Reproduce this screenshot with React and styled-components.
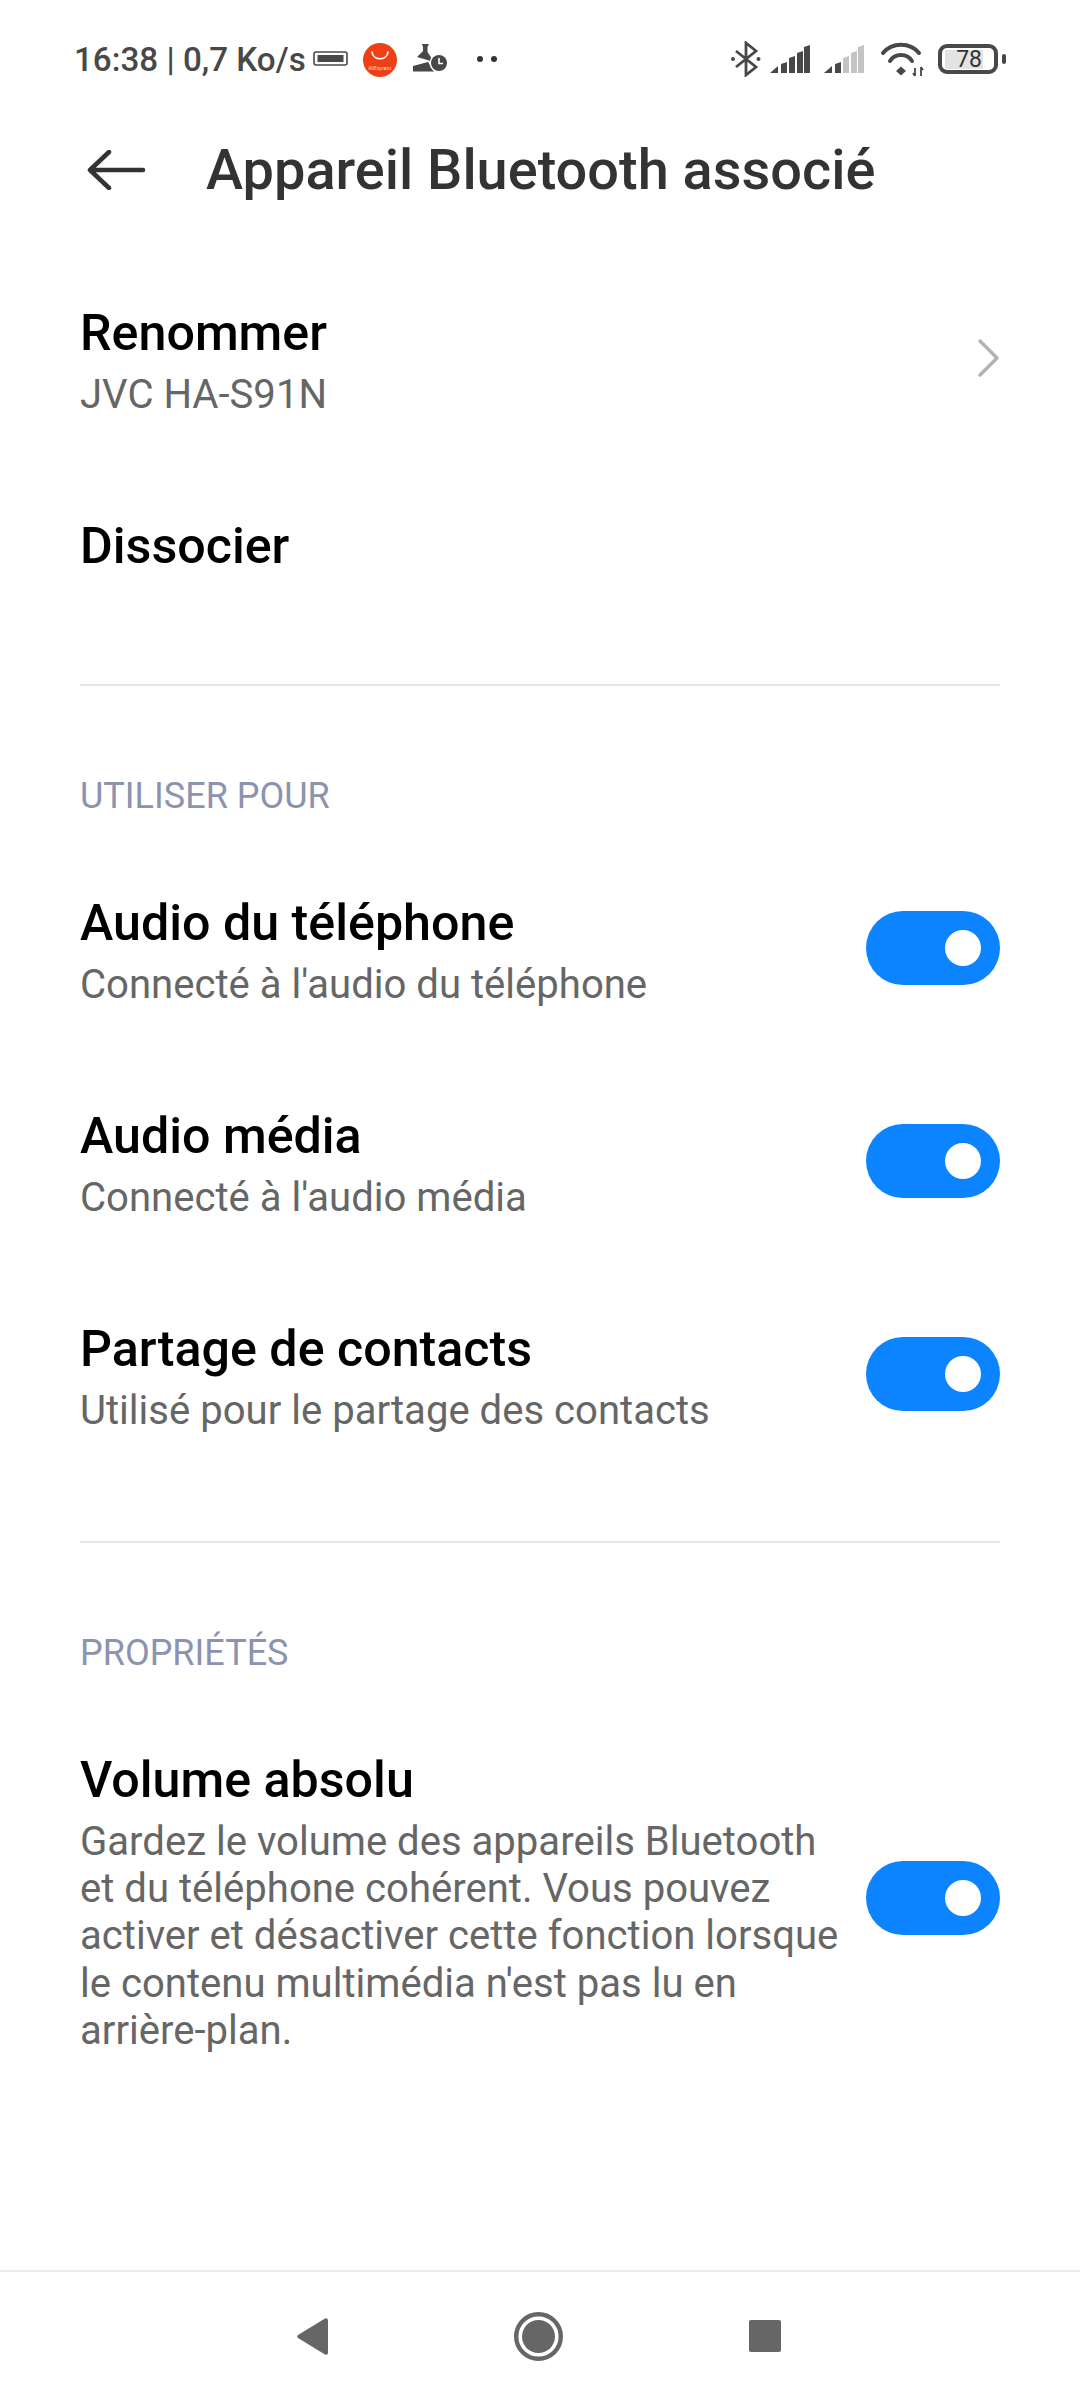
import React from "react";
import styled, { createGlobalStyle } from "styled-components";

const Global = createGlobalStyle`
  html, body { margin: 0; padding: 0; background: #fff; }
  body { font-family: Roboto, "Noto Sans", sans-serif; }
`;

const Page = styled.div`
  width: 1080px;
  height: 2400px;
  display: flex;
  flex-direction: column;
  background: #fff;
  overflow: hidden;
`;

const StatusBar = styled.div`
  height: 118px;
  padding: 0 74px 0 74px;
  display: flex;
  align-items: center;
  justify-content: space-between;
  box-sizing: border-box;
  flex: none;
`;

const StatusGroup = styled.div`
  display: flex;
  align-items: center;
`;

const Clock = styled.span`
  font-size: 33.2px;
  font-weight: 500;
  color: #484848;
  white-space: nowrap;
`;

const StatusIcon = styled.svg`
  display: block;
  flex: none;
  margin-left: ${(p) => p.$gap || 0}px;
`;

const Header = styled.header`
  height: 104px;
  padding-left: 86px;
  display: flex;
  align-items: center;
  gap: 60px;
  flex: none;
`;

const Title = styled.h1`
  margin: 0;
  font-size: 55.9px;
  font-weight: 500;
  color: #333;
  white-space: nowrap;
`;

const Content = styled.main`
  flex: 1;
  padding: 29px 80px 0;
  display: flex;
  flex-direction: column;
`;

const Row = styled.div`
  min-height: ${(p) => p.$height || 213}px;
  display: flex;
  align-items: center;
  justify-content: space-between;
  gap: 24px;
`;

const RowText = styled.div`
  align-self: flex-start;
  margin-top: 52px;
  display: flex;
  flex-direction: column;
  flex: 1;
  min-width: 0;
`;

const RowTitle = styled.div`
  font-size: 50.2px;
  line-height: 60px;
  font-weight: 500;
  color: #000;
`;

const RowSub = styled.div`
  margin-top: 8px;
  font-size: 40.1px;
  line-height: 47.2px;
  color: #666;
`;

const Divider = styled.hr`
  margin: ${(p) => p.$top}px 0 0;
  border: 0;
  border-top: 2px solid #e5e5e5;
`;

const SectionLabel = styled.div`
  margin: 80px 0 15px;
  font-size: 36px;
  line-height: 60px;
  color: #8c93b0;
`;

const Toggle = styled.div`
  width: 134px;
  height: 74px;
  border-radius: 37px;
  background: #0d84ff;
  flex: none;
  display: flex;
  align-items: center;
  justify-content: flex-end;
  padding-right: 19px;
  box-sizing: border-box;
`;

const Knob = styled.div`
  width: 36px;
  height: 36px;
  border-radius: 50%;
  background: #fff;
`;

const NavBar = styled.nav`
  height: 130px;
  padding-right: 3px;
  border-top: 2px solid #ececec;
  box-sizing: border-box;
  flex: none;
  display: flex;
  align-items: center;
  justify-content: center;
  gap: 186px;
`;

const Chevron = () => (
  <svg width="24" height="40" viewBox="0 0 24 40" fill="none" stroke="#b3b3b3" strokeWidth="3.4" strokeLinecap="round" strokeLinejoin="round">
    <path d="M4 3 L21 20 L4 37" />
  </svg>
);

const BackArrow = () => (
  <svg width="60" height="40" viewBox="0 0 60 40" fill="none" stroke="#333" strokeWidth="4.5" strokeLinecap="round" strokeLinejoin="round">
    <path d="M4 20 H57 M23 2 L4 20 L23 38" />
  </svg>
);

const StatusLeftIcons = () => (
  <StatusIcon $gap={7} width="190" height="44" viewBox="0 0 190 44">
    <rect x="1" y="15" width="33" height="13" rx="2" fill="none" stroke="#484848" strokeWidth="1.6" />
    <rect x="4.500" y="18" width="26" height="7" fill="#484848" />
    <circle cx="67" cy="23" r="17" fill="#ee3f17" />
    <path d="M59 15 C60 24 74 24 75 15" fill="none" stroke="#fff" strokeWidth="1.7" strokeLinecap="round" />
    <text x="67" y="33" fontSize="5" fontFamily="Roboto" fill="#ffd9cc" textAnchor="middle">AliExpress</text>
    <g transform="translate(92 1)" fill="#484848">
      <path d="M17 6 H24 L22.500 9 V14 L29 24 L12 19 L18 13 V9 Z" />
      <path d="M8 28 L23 24 L29 33.500 H8 Z" />
      <circle cx="34" cy="25" r="9.500" fill="#fff" />
      <circle cx="34" cy="25" r="8" />
      <path d="M34 20 V25.500 H38" fill="none" stroke="#fff" strokeWidth="1.6" />
    </g>
    <circle cx="167" cy="22" r="3" fill="#333" />
    <circle cx="181" cy="22" r="3" fill="#333" />
  </StatusIcon>
);

const BAR_SPECS = [
  [11, 6, 17],
  [19, 6, 11],
  [27, 6, 6],
  [34, 6, 0],
];

const SignalBars = ({ active, gap }) => (
  <StatusIcon $gap={gap} width="40" height="29" viewBox="0 0 40 29">
    <path d="M0 28 L8 21 V28 Z" fill="#484848" />
    {BAR_SPECS.map(([x, w, top], i) => (
      <path key={x} d={`M${x} ${top + 2} L${x + w} ${top} V28 H${x} Z`} fill={i + 1 < active ? "#484848" : "#c4c4c4"} />
    ))}
  </StatusIcon>
);

const StatusRightIcons = () => (
  <StatusGroup>
    <StatusIcon width="30" height="36" viewBox="0 0 30 36" fill="none" stroke="#484848" strokeWidth="2.8">
      <path d="M5 10 L25 26 L15 34 V2 L25 10 L5 26" />
      <circle cx="2" cy="18" r="2" fill="#484848" stroke="none" />
      <circle cx="27.500" cy="18" r="2" fill="#484848" stroke="none" />
    </StatusIcon>
    <SignalBars active={5} gap={9} />
    <SignalBars active={2} gap={14} />
    <StatusIcon $gap={16} width="46" height="36" viewBox="0 0 46 36" fill="none" stroke="#484848" strokeWidth="4" strokeLinecap="round">
      <path d="M3 12 C12 1 30 1 39 12" />
      <path d="M10 20 C15 12 27 12 32 20" />
      <path d="M21 25.500 L26 30 L21 34.500 L16 30 Z" fill="#484848" stroke="none" />
      <path d="M35 27 V35 M41 26 V35 M33 32 L35 35 M41 26 L43 29" strokeWidth="1.8" strokeLinecap="butt" />
    </StatusIcon>
    <StatusIcon $gap={12} width="68" height="34" viewBox="0 0 68 34">
      <rect x="2" y="4" width="56" height="26" rx="7" fill="none" stroke="#484848" strokeWidth="4" />
      <rect x="7" y="8" width="38" height="19" fill="#e3e3e3" />
      <text x="44" y="25" fontSize="23" fontFamily="Roboto" fill="#333" textAnchor="end">78</text>
      <rect x="64" y="12" width="4" height="10" rx="2" fill="#484848" />
    </StatusIcon>
  </StatusGroup>
);

const ToggleRow = ({ title, sub, height }) => (
  <Row $height={height}>
    <RowText>
      <RowTitle>{title}</RowTitle>
      <RowSub>{sub}</RowSub>
    </RowText>
    <Toggle>
      <Knob />
    </Toggle>
  </Row>
);

export default function App() {
  return (
    <Page>
      <Global />
      <StatusBar>
        <StatusGroup>
          <Clock>16:38 | 0,7 Ko/s</Clock>
          <StatusLeftIcons />
        </StatusGroup>
        <StatusRightIcons />
      </StatusBar>
      <Header>
        <BackArrow />
        <Title>Appareil Bluetooth associé</Title>
      </Header>
      <Content>
        <Row>
          <RowText>
            <RowTitle>Renommer</RowTitle>
            <RowSub>JVC HA-S91N</RowSub>
          </RowText>
          <Chevron />
        </Row>
        <Row>
          <RowText>
            <RowTitle>Dissocier</RowTitle>
          </RowText>
        </Row>
        <Divider $top={7} />
        <SectionLabel>UTILISER POUR</SectionLabel>
        <ToggleRow title="Audio du téléphone" sub="Connecté à l'audio du téléphone" />
        <ToggleRow title="Audio média" sub="Connecté à l'audio média" />
        <ToggleRow title="Partage de contacts" sub="Utilisé pour le partage des contacts" />
        <Divider $top={61} />
        <SectionLabel>PROPRIÉTÉS</SectionLabel>
        <ToggleRow
          title="Volume absolu"
          sub="Gardez le volume des appareils Bluetooth et du téléphone cohérent. Vous pouvez activer et désactiver cette fonction lorsque le contenu multimédia n'est pas lu en arrière-plan."
          height={400}
        />
      </Content>
      <NavBar>
        <svg width="31" height="37" viewBox="0 0 31 37" fill="#666">
          <path d="M28 0.500 a2 2 0 0 1 3 1.500 V35 a2 2 0 0 1 -3 1.500 L1 20 a2 2 0 0 1 0 -3 Z" />
        </svg>
        <svg width="49" height="49" viewBox="0 0 49 49">
          <circle cx="24.500" cy="24.500" r="22.300" fill="none" stroke="#666" strokeWidth="4.400" />
          <circle cx="24.500" cy="24.500" r="16.500" fill="#666" />
        </svg>
        <svg width="32" height="32" viewBox="0 0 32 32" fill="#666">
          <rect width="32" height="32" rx="2" />
        </svg>
      </NavBar>
    </Page>
  );
}
